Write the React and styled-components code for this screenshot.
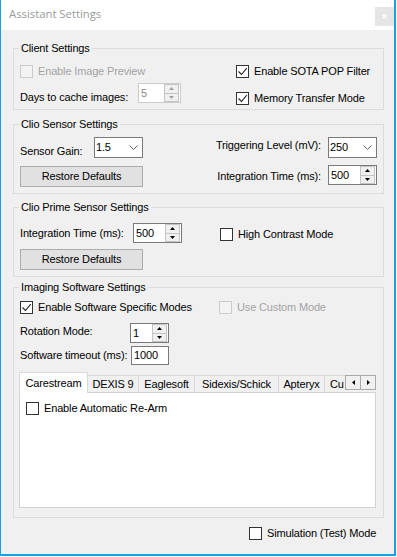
import React from 'react';
import styled, { createGlobalStyle } from 'styled-components';

const Global = createGlobalStyle`
  html, body { margin: 0; padding: 0; background: #ffffff; }
  body {
    font-family: "Liberation Sans", Arial, sans-serif;
    font-size: 11px;
    letter-spacing: -0.15px;
    color: #000;
  }
  * { box-sizing: border-box; }
`;

const ACCENT = '#1c9ee3';

const Window = styled.div`
  width: 396px;
  height: 556px;
  border-left: 1px solid ${ACCENT};
  border-right: 2px solid ${ACCENT};
  border-bottom: 2px solid ${ACCENT};
  background: #f0f0f0;
  display: flex;
  flex-direction: column;
`;

const TitleBar = styled.div`
  height: 30px;
  flex: 0 0 30px;
  background: #ffffff;
  display: flex;
  align-items: flex-start;
  justify-content: space-between;
  padding-left: 8px;
`;

const Title = styled.span`
  font-family: "Open Sans", "Noto Sans", sans-serif;
  font-size: 11.3px;
  letter-spacing: 0;
  line-height: 16px;
  margin-top: 6px;
  color: #9a9a9a;
`;

const CloseBtn = styled.div`
  width: 19px;
  height: 19px;
  margin-top: 7px;
  background: #e5e5e5;
  display: flex;
  align-items: center;
  justify-content: center;
`;

const Content = styled.div`
  flex: 1;
  padding: 0 10px 0 12px;
  display: flex;
  flex-direction: column;
`;

const Group = styled.fieldset`
  margin: ${(p) => p.$mt}px 0 0 0;
  padding: 0;
  min-width: 0;
  width: 371px;
  border: 1px solid #dcdcdc;
`;

const Legend = styled.legend`
  margin-left: 5px;
  padding: 0 2px;
  line-height: 14px;
  font-size: 11px;
`;

const Body = styled.div`
  padding: ${(p) => p.$pad};
  display: flex;
  flex-direction: column;
`;

const Row = styled.div`
  margin-top: ${(p) => p.$mt || 0}px;
  display: grid;
  grid-template-columns: ${(p) => p.$cols || '1fr'};
  align-items: start;
`;

const Field = styled.div`
  display: flex;
  align-items: flex-start;
  justify-content: ${(p) => (p.$end ? 'flex-end' : 'flex-start')};
  gap: ${(p) => p.$gap || 0}px;
  margin-top: ${(p) => p.$mt || 0}px;
`;

const Label = styled.span`
  flex: 0 0 auto;
  width: ${(p) => (p.$w ? `${p.$w}px` : 'auto')};
  padding-top: ${(p) => p.$pt || 0}px;
  line-height: 13px;
  white-space: nowrap;
`;

const CheckRow = styled.label`
  display: flex;
  align-items: center;
  gap: 5px;
  height: 13px;
  margin-top: ${(p) => p.$mt || 0}px;
  color: ${(p) => (p.$disabled ? '#a3a3a3' : '#000')};
  white-space: nowrap;
  line-height: 13px;
`;

const Box = styled.span`
  width: 13px;
  height: 13px;
  flex: 0 0 13px;
  border: 1px solid ${(p) => (p.$disabled ? '#cccccc' : '#333333')};
  background: ${(p) => (p.$disabled ? '#f3f3f3' : '#ffffff')};
  display: flex;
`;

const SpinBox = styled.div`
  width: ${(p) => p.$w}px;
  height: 20px;
  flex: 0 0 auto;
  border: 1px solid ${(p) => (p.$disabled ? '#cccccc' : '#7a7a7a')};
  background: #ffffff;
  display: flex;
  align-items: center;
  color: ${(p) => (p.$disabled ? '#8a8a8a' : '#000')};
`;

const SpinValue = styled.span`
  flex: 1;
  padding-left: 2px;
  line-height: 13px;
`;

const SpinButtons = styled.div`
  align-self: stretch;
  width: 15px;
  margin-right: 1px;
  display: flex;
  flex-direction: column;
  border: 1px solid #c4c4c4;
  background: #f0f0f0;
`;

const SpinHalf = styled.div`
  flex: 1;
  display: flex;
  align-items: center;
  justify-content: center;
  & + & { border-top: 1px solid #c4c4c4; }
`;

const Combo = styled.div`
  width: 49px;
  height: 21px;
  flex: 0 0 auto;
  border: 1px solid #7a7a7a;
  background: #ffffff;
  display: flex;
  align-items: center;
  justify-content: space-between;
  padding: 0 4px 0 1px;
  line-height: 13px;
`;

const TextBox = styled.div`
  width: ${(p) => p.$w}px;
  height: 19px;
  flex: 0 0 auto;
  border: 1px solid #7a7a7a;
  background: #ffffff;
  display: flex;
  align-items: center;
  padding-left: 2px;
  line-height: 13px;
`;

const Button = styled.button`
  width: 123px;
  height: 21px;
  margin-top: ${(p) => p.$mt || 0}px;
  padding: 0;
  border: 1px solid #adadad;
  background: #e1e1e1;
  font: inherit;
  letter-spacing: inherit;
  color: #000;
  line-height: 13px;
`;

const TabControl = styled.div`
  position: relative;
  width: 357px;
  margin-left: -1px;
  grid-column: 1 / -1;
`;

const TabStrip = styled.div`
  position: relative;
  z-index: 1;
  height: 21px;
  margin-bottom: -1px;
  display: flex;
  align-items: flex-end;
  overflow: hidden;
`;

const Tab = styled.div`
  flex: 0 0 ${(p) => p.$w}px;
  height: ${(p) => (p.$active ? 21 : 17)}px;
  margin-bottom: ${(p) => (p.$active ? 0 : 1)}px;
  margin-left: ${(p) => (p.$first ? 0 : -1)}px;
  border: 1px solid #d9d9d9;
  border-bottom: none;
  background: ${(p) => (p.$active ? '#ffffff' : '#f0f0f0')};
  display: flex;
  align-items: center;
  justify-content: ${(p) => (p.$clip ? 'flex-start' : 'center')};
  padding-left: ${(p) => (p.$clip ? 5 : 0)}px;
  line-height: 13px;
  white-space: nowrap;
  position: relative;
  z-index: ${(p) => (p.$active ? 1 : 0)};
`;

const TabArrows = styled.div`
  position: absolute;
  top: 3px;
  right: 0;
  z-index: 2;
  display: flex;
`;

const ArrowBtn = styled.div`
  width: 16px;
  height: 15px;
  border: 1px solid #a9a9a9;
  background: #f0f0f0;
  display: flex;
  align-items: center;
  justify-content: center;
  & + & { margin-left: -1px; }
`;

const TabPanel = styled.div`
  height: 116px;
  border: 1px solid #d2d2d2;
  background: #ffffff;
  padding: 9px 6px;
`;

const BottomRow = styled.div`
  margin-top: 9px;
  padding-left: 236px;
  display: flex;
`;

const CheckMark = () => (
  <svg width="11" height="11" viewBox="0 0 11 11">
    <path d="M1.5 5.5 L4.5 8.5 L9.8 2.2" fill="none" stroke="#222" strokeWidth="1.1" />
  </svg>
);

function Check({ checked, disabled, mt, children }) {
  return (
    <CheckRow $disabled={disabled} $mt={mt}>
      <Box $disabled={disabled}>{checked && <CheckMark />}</Box>
      <span>{children}</span>
    </CheckRow>
  );
}

const Tri = ({ dir, color }) => {
  const d = {
    up: 'M0 3 L2.5 0 L5 3 Z',
    down: 'M0 0 L2.5 3 L5 0 Z',
    left: 'M3 0 L0 2.5 L3 5 Z',
    right: 'M0 0 L3 2.5 L0 5 Z',
  }[dir];
  const vertical = dir === 'up' || dir === 'down';
  return (
    <svg width={vertical ? 5 : 3} height={vertical ? 3 : 5} viewBox={vertical ? '0 0 5 3' : '0 0 3 5'}>
      <path d={d} fill={color} />
    </svg>
  );
};

function Spin({ value, w, disabled }) {
  const c = disabled ? '#a0a0a0' : '#000';
  return (
    <SpinBox $w={w} $disabled={disabled}>
      <SpinValue>{value}</SpinValue>
      <SpinButtons>
        <SpinHalf><Tri dir="up" color={c} /></SpinHalf>
        <SpinHalf><Tri dir="down" color={c} /></SpinHalf>
      </SpinButtons>
    </SpinBox>
  );
}

function Select({ value }) {
  return (
    <Combo>
      <span>{value}</span>
      <svg width="9" height="5" viewBox="0 0 9 5">
        <path d="M0.5 0.5 L4.5 4.5 L8.5 0.5" fill="none" stroke="#606060" strokeWidth="1" />
      </svg>
    </Combo>
  );
}

const tabs = [
  { name: 'Carestream', w: 69, active: true },
  { name: 'DEXIS 9', w: 52 },
  { name: 'Eaglesoft', w: 57 },
  { name: 'Sidexis/Schick', w: 85 },
  { name: 'Apteryx', w: 47 },
  { name: 'Cu', w: 60, clip: true },
];

export default function App() {
  return (
    <>
      <Global />
      <Window>
        <TitleBar>
          <Title>Assistant Settings</Title>
          <CloseBtn>
            <svg width="5" height="5" viewBox="0 0 5 5">
              <path d="M0.5 0.5 L4.5 4.5 M4.5 0.5 L0.5 4.5" stroke="#ffffff" strokeWidth="1.1" />
            </svg>
          </CloseBtn>
        </TitleBar>
        <Content>
          <Group $mt={11}>
            <Legend>Client Settings</Legend>
            <Body $pad="10px 6px 4px 6px">
              <Row $cols="216px 1fr">
                <Check disabled>Enable Image Preview</Check>
                <Check checked>Enable SOTA POP Filter</Check>
              </Row>
              <Row $cols="216px 1fr" $mt={5}>
                <Field>
                  <Label $w={118} $pt={8}>Days to cache images:</Label>
                  <Spin value="5" w={43} disabled />
                </Field>
                <Check checked mt={9}>Memory Transfer Mode</Check>
              </Row>
            </Body>
          </Group>

          <Group $mt={7}>
            <Legend>Clio Sensor Settings</Legend>
            <Body $pad="6px 6px 6px 6px">
              <Row $cols="1fr auto">
                <Field>
                  <Label $w={74} $pt={8}>Sensor Gain:</Label>
                  <Select value="1.5" />
                </Field>
                <Field $end $gap={7}>
                  <Label $pt={2}>Triggering Level (mV):</Label>
                  <Select value="250" />
                </Field>
              </Row>
              <Row $cols="1fr auto" $mt={7}>
                <Button $mt={1}>Restore Defaults</Button>
                <Field $end $gap={7}>
                  <Label $pt={5}>Integration Time (ms):</Label>
                  <Spin value="500" w={49} />
                </Field>
              </Row>
            </Body>
          </Group>

          <Group $mt={6}>
            <Legend>Clio Prime Sensor Settings</Legend>
            <Body $pad="9px 6px 6px 6px">
              <Row $cols="200px 1fr">
                <Field>
                  <Label $w={113} $pt={4}>Integration Time (ms):</Label>
                  <Spin value="500" w={49} />
                </Field>
                <Check mt={5}>High Contrast Mode</Check>
              </Row>
              <Row $mt={6}>
                <Button>Restore Defaults</Button>
              </Row>
            </Body>
          </Group>

          <Group $mt={3}>
            <Legend>Imaging Software Settings</Legend>
            <Body $pad="7px 6px 9px 6px">
              <Row $cols="199px 1fr">
                <Check checked>Enable Software Specific Modes</Check>
                <Check disabled>Use Custom Mode</Check>
              </Row>
              <Row $mt={9}>
                <Field>
                  <Label $w={110} $pt={2}>Rotation Mode:</Label>
                  <Spin value="1" w={39} />
                </Field>
              </Row>
              <Row $mt={3}>
                <Field>
                  <Label $w={111} $pt={3}>Software timeout (ms):</Label>
                  <TextBox $w={38}>1000</TextBox>
                </Field>
              </Row>
              <Row $mt={7}>
                <TabControl>
                  <TabStrip>
                    {tabs.map((t, i) => (
                      <Tab key={t.name} $w={t.w} $active={t.active} $first={i === 0} $clip={t.clip}>
                        {t.name}
                      </Tab>
                    ))}
                  </TabStrip>
                  <TabArrows>
                    <ArrowBtn><Tri dir="left" color="#000" /></ArrowBtn>
                    <ArrowBtn><Tri dir="right" color="#000" /></ArrowBtn>
                  </TabArrows>
                  <TabPanel>
                    <Check>Enable Automatic Re-Arm</Check>
                  </TabPanel>
                </TabControl>
              </Row>
            </Body>
          </Group>

          <BottomRow>
            <Check>Simulation (Test) Mode</Check>
          </BottomRow>
        </Content>
      </Window>
    </>
  );
}
